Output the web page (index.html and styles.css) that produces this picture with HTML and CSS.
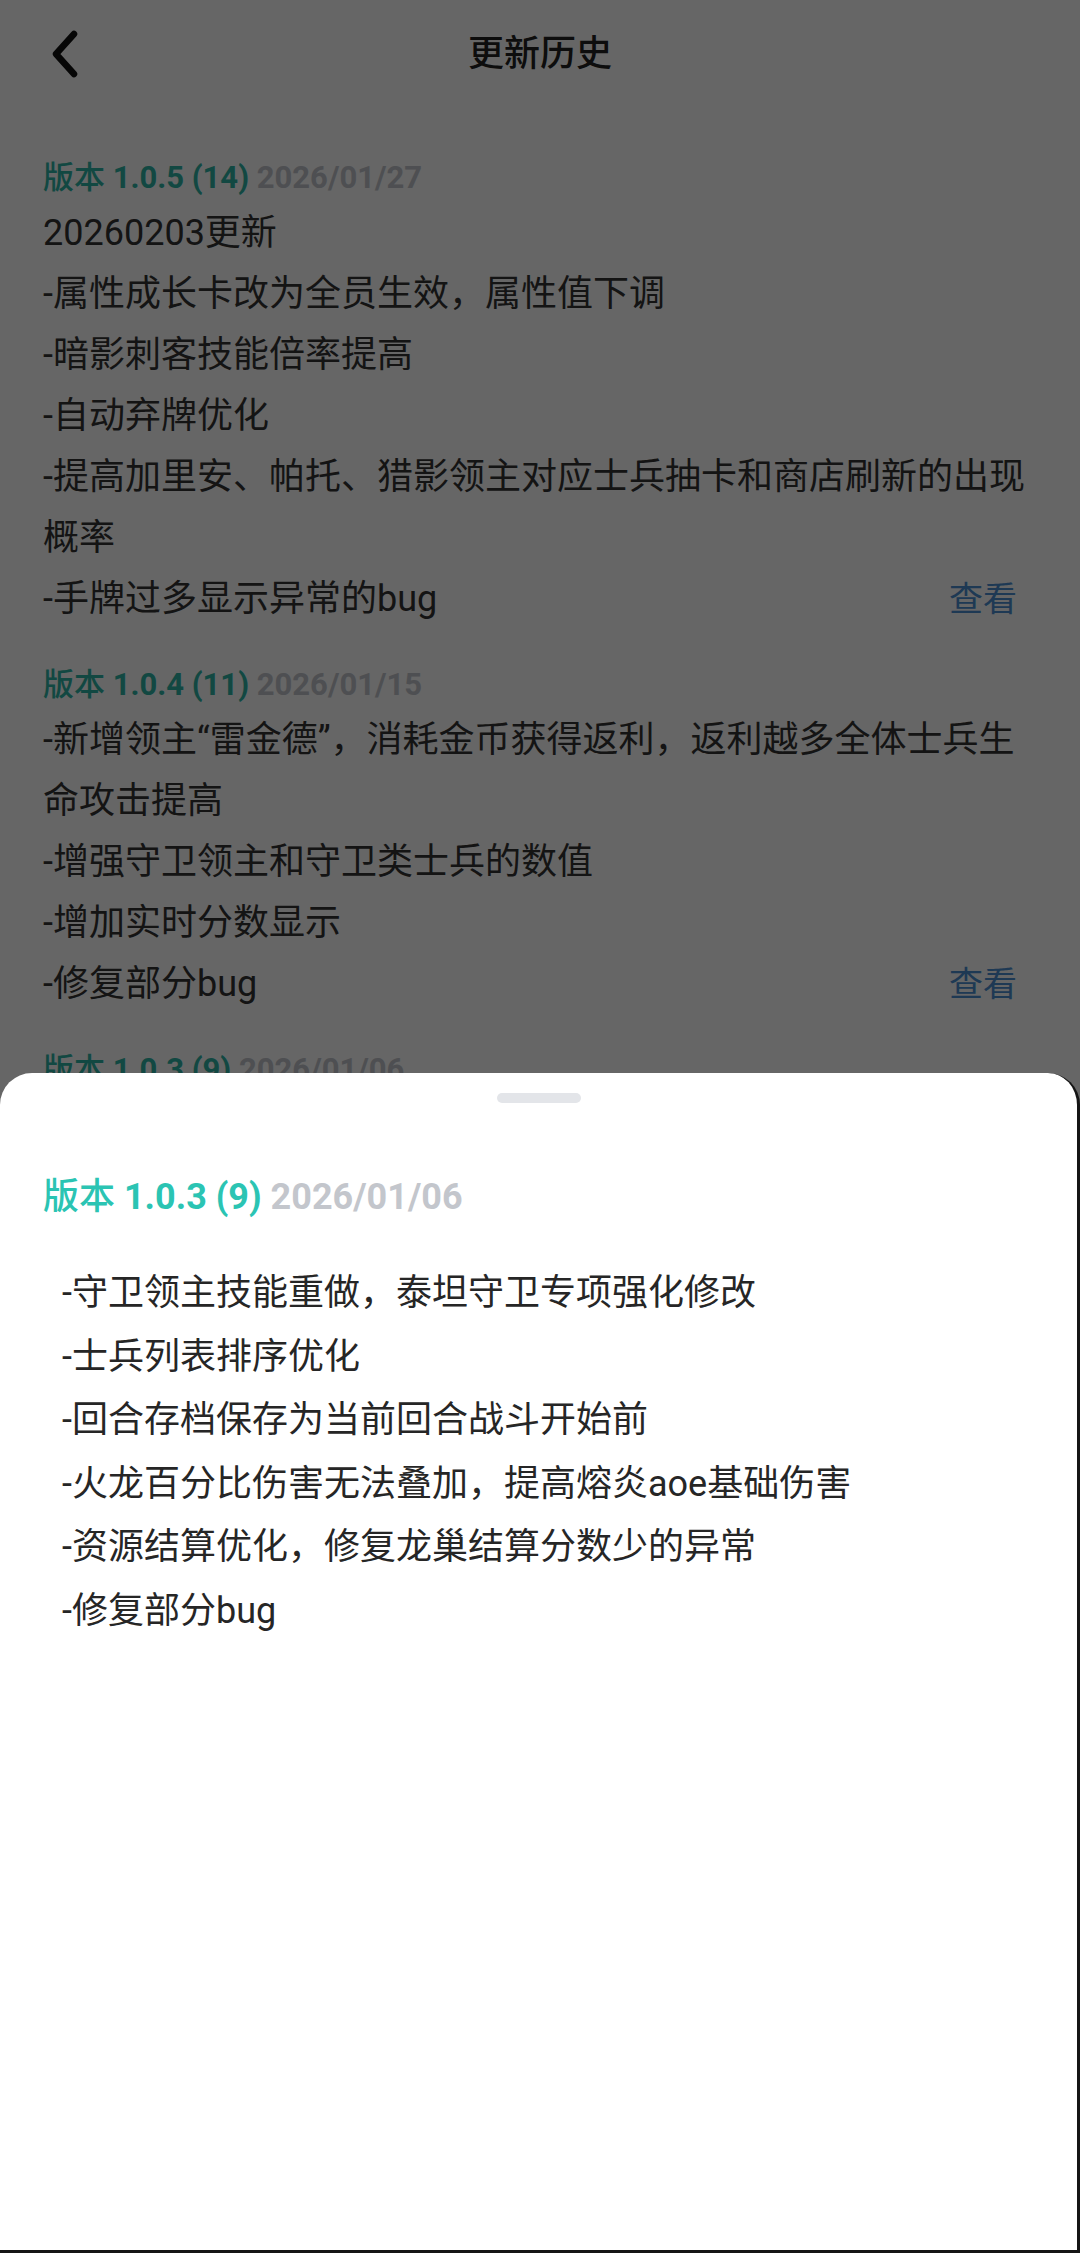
FILE: index.html
```html
<!DOCTYPE html>
<html lang="zh-CN">
<head>
<meta charset="utf-8">
<title>更新历史</title>
<link rel="stylesheet" href="styles.css">
</head>
<body>
<div class="page">
  <header class="topbar">
    <span class="back">
      <svg width="32" height="48" viewBox="0 0 32 48"><path d="M24 4 L6 24 L24 44" fill="none" stroke="#111" stroke-width="6.5" stroke-linecap="round" stroke-linejoin="round"/></svg>
    </span>
    <h1 class="title">更新历史</h1>
    <span class="spacer"></span>
  </header>
  <main class="list">
    <section class="entry">
      <div class="ver"><span class="ver-name"><span class="cjk">版本</span> 1.0.5 (14)</span> <span class="ver-date">2026/01/27</span></div>
      <div class="notes">
        <p>20260203更新</p>
        <p>-属性成长卡改为全员生效，属性值下调</p>
        <p>-暗影刺客技能倍率提高</p>
        <p>-自动弃牌优化</p>
        <p>-提高加里安、帕托、猎影领主对应士兵抽卡和商店刷新的出现概率</p>
        <div class="last"><p>-手牌过多显示异常的bug</p><a class="view">查看</a></div>
      </div>
    </section>
    <section class="entry">
      <div class="ver"><span class="ver-name"><span class="cjk">版本</span> 1.0.4 (11)</span> <span class="ver-date">2026/01/15</span></div>
      <div class="notes">
        <p>-新增领主“雷金德”，消耗金币获得返利，返利越多全体士兵生命攻击提高</p>
        <p>-增强守卫领主和守卫类士兵的数值</p>
        <p>-增加实时分数显示</p>
        <div class="last"><p>-修复部分bug</p><a class="view">查看</a></div>
      </div>
    </section>
    <section class="entry">
      <div class="ver"><span class="ver-name"><span class="cjk">版本</span> 1.0.3 (9)</span> <span class="ver-date">2026/01/06</span></div>
    </section>
  </main>
</div>
<div class="mask"></div>
<div class="sheet">
  <div class="handle"></div>
  <div class="sheet-ver"><span class="ver-name"><span class="cjk">版本</span> 1.0.3 (9)</span> <span class="ver-date">2026/01/06</span></div>
  <ul class="sheet-notes">
    <li>-守卫领主技能重做，泰坦守卫专项强化修改</li>
    <li>-士兵列表排序优化</li>
    <li>-回合存档保存为当前回合战斗开始前</li>
    <li>-火龙百分比伤害无法叠加，提高熔炎aoe基础伤害</li>
    <li>-资源结算优化，修复龙巢结算分数少的异常</li>
    <li>-修复部分bug</li>
  </ul>
</div>
</body>
</html>
```

FILE: styles.css
```css
html, body {
  margin: 0;
  padding: 0;
}
body {
  width: 1080px;
  height: 2253px;
  position: relative;
  overflow: hidden;
  background: #ffffff;
  font-family: Roboto, "Noto Sans CJK SC", sans-serif;
  color: #333;
}
.page {
  height: 2253px;
}
.topbar {
  height: 108px;
  display: grid;
  grid-template-columns: 1fr auto 1fr;
  align-items: center;
}
.back {
  display: flex;
  align-items: center;
  padding-left: 50px;
}
.back svg {
  display: block;
}
.title {
  margin: 0;
  font-size: 36px;
  font-weight: 500;
  color: #222;
  line-height: 48px;
}
.list {
  padding: 50px 43px 0;
}
.entry {
  margin-bottom: 35px;
}
.ver {
  font-size: 31px;
  line-height: 40px;
  font-weight: 700;
  margin-bottom: 5px;
}
.cjk {
  font-weight: 500;
}
.ver-name {
  color: #2db5a5;
}
.ver-date {
  color: #c3c6cc;
}
.notes p {
  margin: 0;
  font-size: 36px;
  line-height: 61px;
  color: #333;
}
.last {
  display: flex;
  justify-content: space-between;
  align-items: center;
}
.view {
  font-size: 34px;
  line-height: 61px;
  color: #4b8fd2;
  margin-right: 20px;
}
.mask {
  position: fixed;
  inset: 0;
  background: rgba(0, 0, 0, 0.6);
}
.sheet {
  position: absolute;
  top: 1073px;
  left: 0;
  right: 0;
  bottom: 0;
  background: #fff;
  border-radius: 32px 32px 0 0;
  border-right: 3px solid #151515;
  border-bottom: 3px solid #151515;
  box-sizing: border-box;
}
.handle {
  width: 84px;
  height: 10px;
  border-radius: 5px;
  background: #e3e5e9;
  margin: 20px auto 0;
}
.sheet-ver {
  margin-top: 72px;
  padding: 0 43px;
  font-size: 36px;
  line-height: 44px;
  font-weight: 700;
}
.sheet-ver .ver-name {
  color: #2bc4b3;
}
.sheet-notes {
  list-style: none;
  margin: 43px 0 0;
  padding: 0 43px 0 62px;
}
.sheet-notes li {
  font-size: 36px;
  line-height: 63.6px;
  color: #262626;
}
```
